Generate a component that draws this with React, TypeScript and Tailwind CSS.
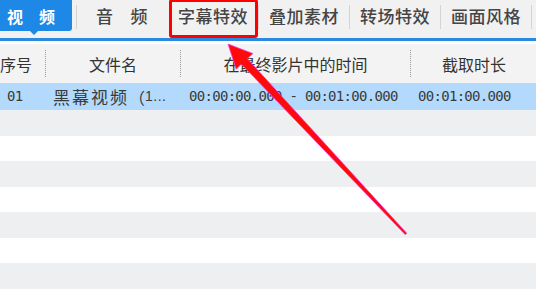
const tabs = ["音频", "字幕特效", "叠加素材", "转场特效", "画面风格"];

const rows = [0, 1, 2, 3, 4, 5, 6];

function Sep({ hidden }: { hidden?: boolean }) {
  return <div className={hidden ? "my-[5px] mb-[9px] w-px" : "my-[5px] mb-[9px] w-px bg-[#d4d4d4]"} />;
}

function HeadSep() {
  return <div className="h-[27px] w-px self-center border-l border-dotted border-[#9a9a9a]" />;
}

export default function App() {
  return (
    <div className="relative h-[290px] w-[536px] overflow-hidden bg-white font-['Noto_Sans_CJK_SC',sans-serif] text-[#333]">
      {/* toolbar */}
      <div className="flex h-[38px] bg-[#f1f1f1]">
        <div className="relative flex h-[31px] w-[72px] shrink-0 items-center gap-[16px] rounded-br-[3px] bg-[#1d88e5] pl-[7px] text-[16px] font-bold text-white">
          <span>视</span>
          <span>频</span>
          <span className="absolute bottom-[-4px] left-[30px] h-0 w-0 border-x-[4px] border-t-[4px] border-x-transparent border-t-[#1d88e5]" />
        </div>
        <div className="ml-[4px] flex">
          {tabs.map((t, i) => (
            <div key={t} className="flex">
              <Sep hidden={i === 1} />
              <div className="relative flex h-[38px] w-[90px] items-center justify-center pb-[7px] text-[17px] font-medium tracking-[0.5px] text-[#454545]">
                {i === 0 ? (
                  <div className="flex gap-[17px]">
                    <span>音</span>
                    <span>频</span>
                  </div>
                ) : (
                  t
                )}
                {i === 1 && (
                  <div className="absolute bottom-0 left-[1px] right-0 top-[-1px] rounded-[3px] border-[3px] border-[#ff0000]" />
                )}
              </div>
            </div>
          ))}
          <Sep />
        </div>
      </div>
      <div className="h-[3px] bg-[#2a8ae0]" />
      <div className="h-[3px] bg-white" />

      {/* header */}
      <div className="flex h-[39px] bg-[#f3f3f3] text-[16px] text-[#333]">
        <div className="flex w-[45px] items-center">序号</div>
        <HeadSep />
        <div className="flex w-[134px] items-center justify-center">文件名</div>
        <HeadSep />
        <div className="flex w-[229px] items-center justify-center">在最终影片中的时间</div>
        <HeadSep />
        <div className="flex flex-1 items-center justify-center pl-[1px]">截取时长</div>
      </div>

      {/* selected row */}
      <div className="flex h-[27px] items-center bg-[#b3dafc] text-[#3a3a3a]">
        <div className="w-[46px] pl-[7px] font-['DejaVu_Sans_Mono',monospace] text-[14px] tracking-[-0.7px]">01</div>
        <div className="flex w-[135px] items-center pl-[7px]">
          <span className="text-[17px] tracking-[2px]">黑幕视频</span>
          <span className="text-[16px]">（</span>
          <span className="font-['Liberation_Sans',sans-serif] text-[14px] tracking-[0.5px]">1...</span>
        </div>
        <div className="w-[230px] whitespace-pre pl-[8px] font-['DejaVu_Sans_Mono',monospace] text-[14px] tracking-[-0.7px]">
          00:00:00.000 - 00:01:00.000
        </div>
        <div className="flex-1 pl-[7px] font-['DejaVu_Sans_Mono',monospace] text-[14px] tracking-[-0.7px]">00:01:00.000</div>
      </div>

      {/* empty rows */}
      {rows.map((r) => (
        <div key={r} className={r % 2 === 0 ? "h-[25.5px] bg-[#eeeff1]" : "h-[25.5px] bg-white"} />
      ))}

      {/* annotation arrow */}
      <svg className="pointer-events-none absolute inset-0" width="536" height="290" viewBox="0 0 536 290">
        <path
          d="M228 44 L253 53.6 L247.3 58.6 L406.8 233.3 L405.3 234.7 L241.4 64.1 L236.2 69.3 Z"
          fill="#ff0a0a"
          stroke="#f23cf0"
          strokeWidth="0.7"
          strokeLinejoin="round"
        />
      </svg>
    </div>
  );
}
